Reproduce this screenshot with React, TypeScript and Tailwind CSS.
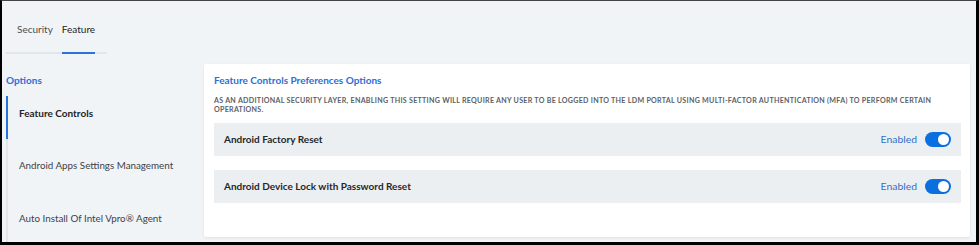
const font = { fontFamily: "Lato, 'Open Sans', sans-serif" };

const navItems = [
  "Feature Controls",
  "Android Apps Settings Management",
  "Auto Install Of Intel Vpro® Agent",
];

const rows = ["Android Factory Reset", "Android Device Lock with Password Reset"];

export default function App() {
  return (
    <div
      className="box-border flex h-[245px] w-[979px] flex-col overflow-hidden border-t border-l-2 border-r-[3px] border-b-[3px] border-t-[#444] border-l-black border-r-black border-b-black bg-[#f1f4f7]"
      style={font}
    >
      {/* tabs */}
      <div className="h-[63px] shrink-0 pl-[4px] pt-[20px]">
        <div className="flex w-[101px] gap-[9px] border-b-2 border-[#e2e6ea] pl-[11px] pb-[15px] text-[10px] leading-4">
          <span className="text-[#4a4f55]">Security</span>
          <span className="-mb-[17px] border-b-2 border-[#2a73d8] pb-[15px] text-[#1f2327]">Feature</span>
        </div>
      </div>

      <div className="flex flex-1">
        {/* sidebar */}
        <div className="w-[202px] shrink-0 pl-[4px] pt-[8px]">
          <div className="text-[10px] font-bold leading-4 text-[#2a6fd6]">Options</div>
          <div className="mt-[8px] flex h-[200px] flex-col border-l-2 border-[#e3e7eb]">
            {navItems.map((item, i) => (
              <div
                key={item}
                className={
                  i === 0
                    ? "-ml-[2px] h-[43px] border-l-2 border-[#2a73d8] pl-[11px] pt-[9px] text-[10px] font-bold leading-4 text-[#1f2327]"
                    : "mt-[9px] h-[44px] pl-[11px] pt-[9px] text-[9.8px] leading-4 text-[#3d4247]"
                }
              >
                {item}
              </div>
            ))}
          </div>
        </div>

        {/* card */}
        <div className="mr-[6px] h-[173px] flex-1 rounded-[2px] bg-white pl-[10px] pr-[9px] pt-[10px] shadow-[0_1px_3px_rgba(0,0,0,0.08)]">
          <div className="text-[10px] font-bold leading-[12px] text-[#2a6fd6]">
            Feature Controls Preferences Options
          </div>
          <p className="mt-[10px] text-[7.1px] font-bold uppercase leading-[9px] tracking-[0.04em] text-[#5b6066]">
            As an additional security layer, enabling this setting will require any user to be logged into the LDM
            portal using multi-factor authentication (MFA) to perform certain operations.
          </p>
          <div className="mt-[9px] flex flex-col gap-[14px]">
            {rows.map((r) => (
              <div key={r} className="flex h-[33px] items-center justify-between bg-[#eceff2] pl-[10px] pr-[10px]">
                <span className="text-[10px] font-bold text-[#24282c]">{r}</span>
                <div className="flex items-center gap-[8px]">
                  <span className="text-[10.4px] text-[#2f6fc9]">Enabled</span>
                  <div className="flex h-[15px] w-[26px] items-center justify-end rounded-full bg-[#0b6fdf] pr-[2px]">
                    <div className="h-[11px] w-[11px] rounded-full bg-white" />
                  </div>
                </div>
              </div>
            ))}
          </div>
        </div>
      </div>
    </div>
  );
}
